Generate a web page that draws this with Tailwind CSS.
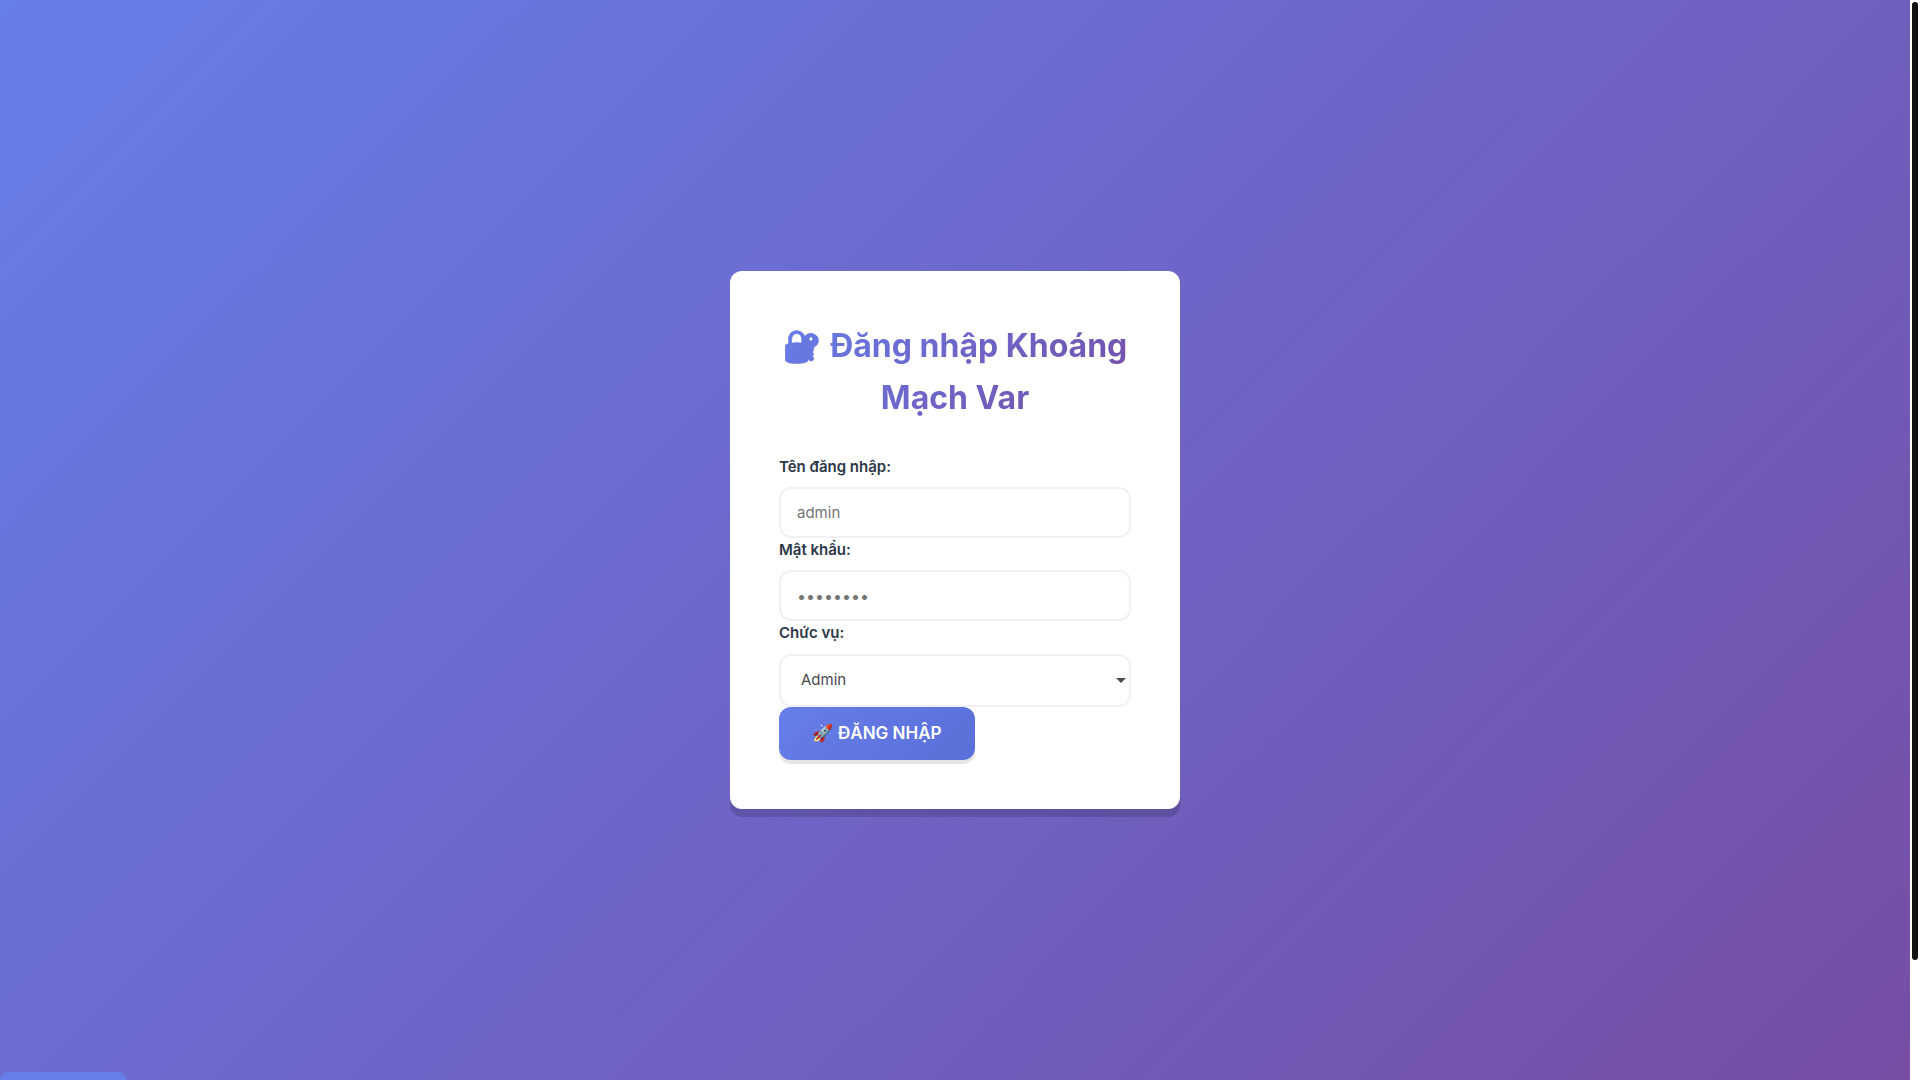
<!DOCTYPE html>
<html lang="vi">
  <head>
    <meta charset="UTF-8" />
    <meta name="viewport" content="width=device-width, initial-scale=1.0" />
    <title>Đăng nhập Khoáng Mạch Var</title>
    <script src="https://cdn.jsdelivr.net/npm/@tailwindcss/browser@4"></script>
  </head>
  <body class="flex h-screen overflow-hidden bg-white font-['Inter','Noto_Color_Emoji',sans-serif] text-[#2d3748]">
    <main class="relative flex flex-1 items-center justify-center overflow-hidden bg-[linear-gradient(135deg,#667eea_0%,#764ba2_100%)] bg-[length:100%_112%]">
      <div class="w-full max-w-[450px] rounded-xl border border-white/80 bg-white p-12 shadow-[0_8px_0_rgba(0,0,0,0.15)]">
        <h1 class="mb-[31px] bg-[linear-gradient(135deg,#667eea_0%,#764ba2_100%)] bg-clip-text text-center text-[32px] leading-[52px] font-bold text-transparent">
          🔐 Đăng nhập Khoáng Mạch Var
        </h1>
        <form>
          <label for="username" class="mb-2 block text-[15px] leading-6 font-semibold">Tên đăng nhập:</label>
          <input
            id="username"
            type="text"
            placeholder="admin"
            class="block h-[51px] w-full rounded-xl border-2 border-[#f1f0f7] bg-white px-4 text-[15px] placeholder:text-[#757575]"
          />
          <label for="password" class="mb-2 block text-[15px] leading-6 font-semibold">Mật khẩu:</label>
          <input
            id="password"
            type="password"
            placeholder="••••••••"
            class="block h-[51px] w-full rounded-xl border-2 border-[#f1f0f7] bg-white px-4 text-base placeholder:text-[#757575]"
          />
          <label for="role" class="mb-2 block text-[15px] leading-6 font-semibold">Chức vụ:</label>
          <div class="relative mt-[9px]">
            <select
              id="role"
              class="block h-[53px] w-full appearance-none rounded-xl border-2 border-[#f1f0f7] bg-white px-5 text-[15px] text-[#4a4a4a]"
            >
              <option>Admin</option>
              <option>Nhân viên</option>
            </select>
            <svg class="pointer-events-none absolute top-6 right-[5px] h-[5px] w-[10px] fill-[#4a4a4a]" viewBox="0 0 10 5">
              <path d="M0 0h10L5 5z" />
            </svg>
          </div>
          <button
            type="submit"
            class="block h-[53px] min-w-[196px] rounded-xl bg-[linear-gradient(135deg,#667eea_0%,#5a6fd8_100%)] px-8 text-[17px] font-semibold text-white shadow-[0_4px_0_rgba(0,0,0,0.1)]"
          >
            🚀 ĐĂNG NHẬP
          </button>
        </form>
      </div>
      <div class="absolute bottom-0 left-0 h-2 w-[126px] rounded-t-lg bg-[#667eea]"></div>
    </main>
    <!-- Thanh cuộn -->
    <div class="w-[10px] bg-white p-0.5">
      <div class="h-[89%] rounded-sm bg-[#111111]"></div>
    </div>
  </body>
</html>
